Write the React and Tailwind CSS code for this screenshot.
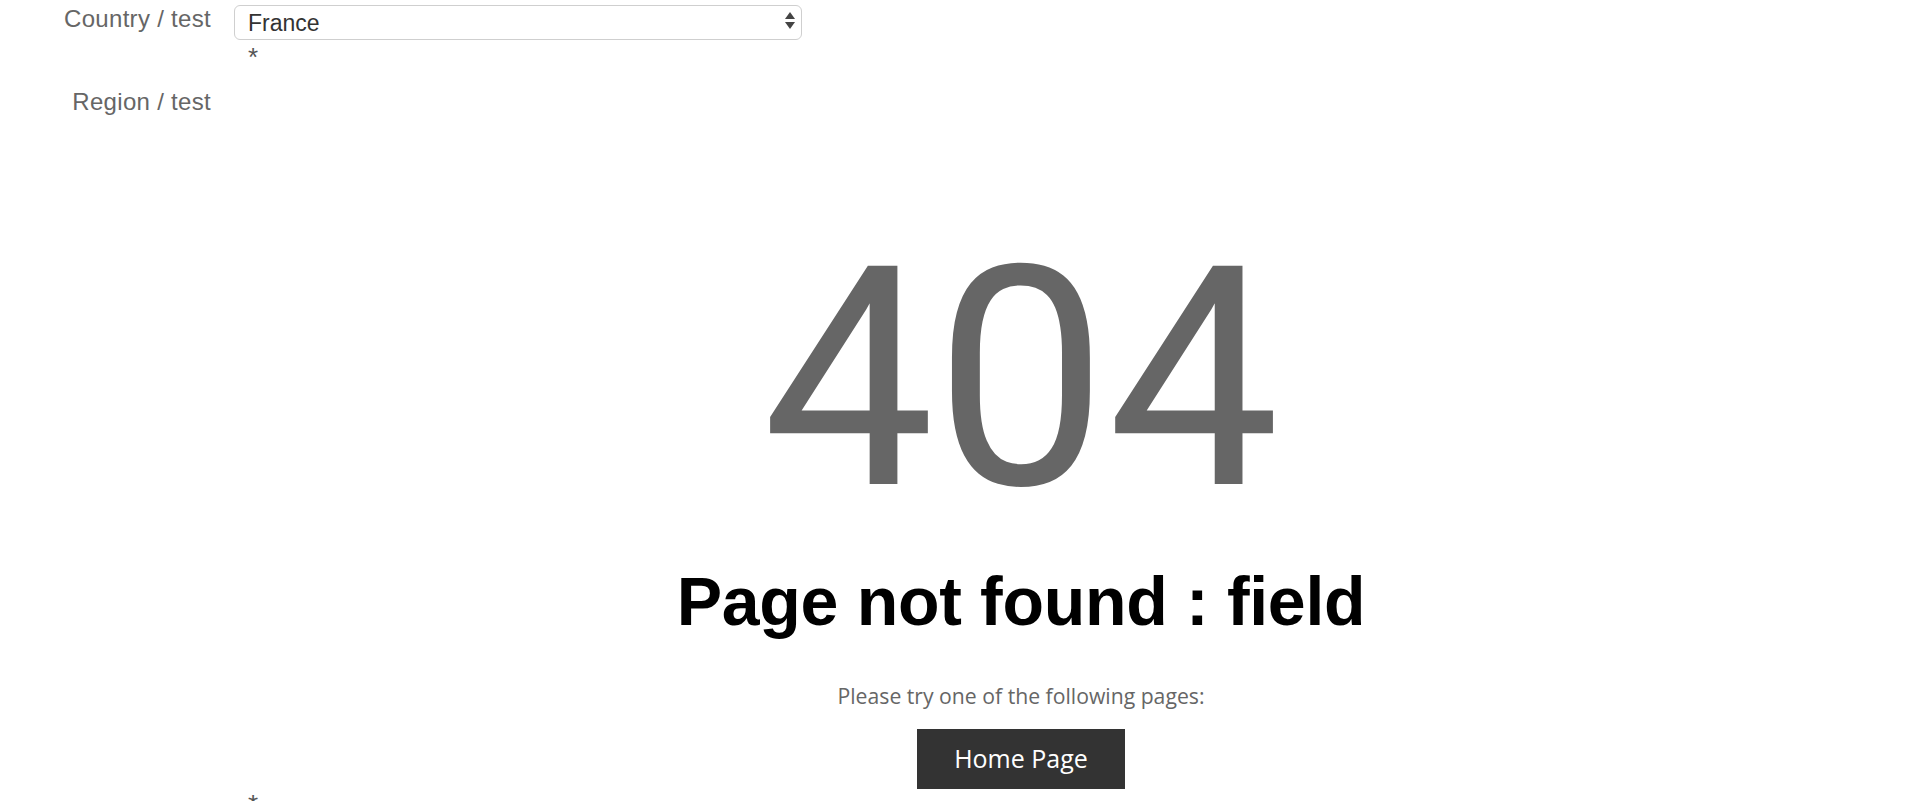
import React from "react";

function Asterisk({ top }) {
  return (
    <div
      className={`pl-[14px] text-[26px] leading-[20px] text-[#555] font-['Liberation_Sans',Arial,sans-serif] h-[20px] ${
        top ? "mt-[7px]" : "mt-[5px]"
      }`}
    >
      *
    </div>
  );
}

export default function App() {
  return (
    <div className="min-h-screen w-full bg-white font-['Liberation_Sans',Arial,sans-serif]">
      {/* Row 1 */}
      <div className="flex">
        <div className="w-[211px] shrink-0 text-right mt-[4px] text-[24px] leading-[30px] tracking-[0.3px] text-[#666]">
          Country / test
        </div>
        <div className="ml-[23px] w-[568px]">
          <div className="mt-[5px] h-[35px] rounded-[6px] border border-[#cfcfcf] bg-white flex items-center justify-between pl-[13px] pr-[6px]">
            <span className="text-[23px] leading-[26px] text-[#333] mt-[1px]">France</span>
            <svg width="10" height="18" viewBox="0 0 10 18" className="mt-[-3px]">
              <polygon points="5,0 10,7 0,7" fill="#444" />
              <polygon points="0,10 10,10 5,17" fill="#444" />
            </svg>
          </div>
          <Asterisk top />
        </div>
      </div>

      {/* Row 2 */}
      <div className="flex">
        <div className="w-[211px] shrink-0 text-right mt-[20px] text-[24px] leading-[30px] tracking-[0.3px] text-[#666] self-start">
          Region / test
        </div>
        <div className="ml-[23px] w-[1574px]">
          <div className="pt-[159px] flex flex-col items-center">
            <div className="font-['Roboto',sans-serif] text-[307px] leading-[307px] text-[#666]">
              404
            </div>
            <h1 className="mt-[34px] font-['Liberation_Sans',Arial,sans-serif] font-bold text-[68px] leading-[68px] tracking-[-0.3px] text-black">
              Page not found : field
            </h1>
            <p className="mt-[50px] font-['Open_Sans',sans-serif] text-[21.2px] leading-[21px] text-[#666]">
              Please try one of the following pages:
            </p>
            <a
              href="#"
              className="mt-[23px] w-[208px] h-[60px] bg-[#333] flex items-center justify-center font-['Open_Sans',sans-serif] text-[25px] text-white"
            >
              Home Page
            </a>
          </div>
          <Asterisk />
        </div>
      </div>
    </div>
  );
}
